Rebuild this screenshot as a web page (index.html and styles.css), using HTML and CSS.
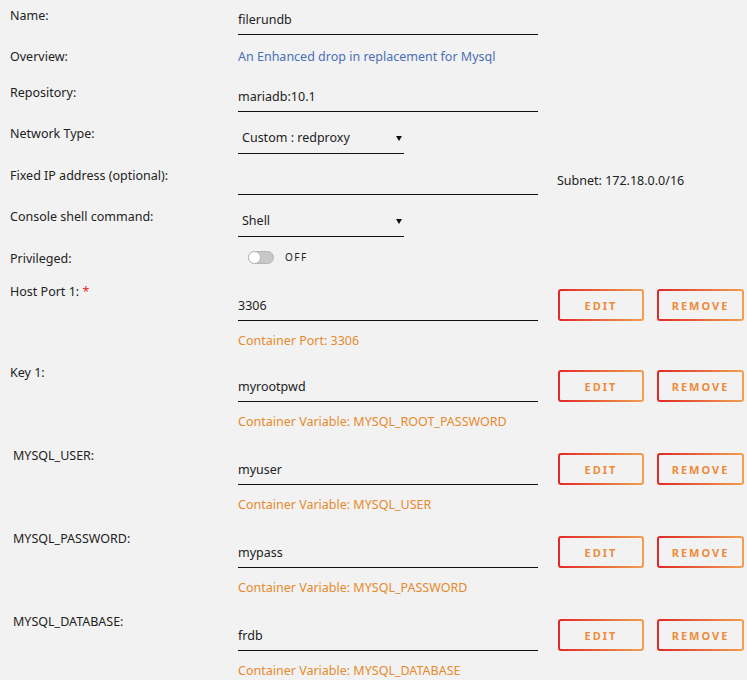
FILE: index.html
```html
<!DOCTYPE html>
<html lang="en">
<head>
  <meta charset="UTF-8">
  <meta name="viewport" content="width=device-width, initial-scale=1.0">
  <title>Add Container</title>
  <link rel="stylesheet" href="styles.css">
</head>
<body>

  <!-- Basic settings -->
  <div class="form">
    <div class="row">
      <div class="label">Name:</div>
      <div class="field"><div class="input">filerundb</div></div>
    </div>

    <div class="row text">
      <div class="label">Overview:</div>
      <div class="field"><div class="overview">An Enhanced drop in replacement for Mysql</div></div>
    </div>

    <div class="row">
      <div class="label">Repository:</div>
      <div class="field"><div class="input">mariadb:10.1</div></div>
    </div>

    <div class="row">
      <div class="label">Network Type:</div>
      <div class="field"><div class="input select">Custom : redproxy<span class="arrow"></span></div></div>
    </div>

    <div class="row">
      <div class="label">Fixed IP address (optional):</div>
      <div class="field"><div class="input"></div></div>
      <div class="subnet">Subnet: 172.18.0.0/16</div>
    </div>

    <div class="row">
      <div class="label">Console shell command:</div>
      <div class="field"><div class="input select">Shell<span class="arrow"></span></div></div>
    </div>

    <div class="row switch-row">
      <div class="label">Privileged:</div>
      <div class="field">
        <div class="switch"><span class="knob"></span></div>
        <span class="switch-text">OFF</span>
      </div>
    </div>

    <!-- Ports and variables -->
    <div class="row config port">
      <div class="label">Host Port 1: <span class="req">*</span></div>
      <div class="field">
        <div class="input">3306</div>
        <div class="hint">Container Port: 3306</div>
      </div>
      <div class="buttons">
        <button class="btn edit">EDIT</button>
        <button class="btn">REMOVE</button>
      </div>
    </div>

    <div class="row config">
      <div class="label">Key 1:</div>
      <div class="field">
        <div class="input">myrootpwd</div>
        <div class="hint">Container Variable: MYSQL_ROOT_PASSWORD</div>
      </div>
      <div class="buttons">
        <button class="btn edit">EDIT</button>
        <button class="btn">REMOVE</button>
      </div>
    </div>

    <div class="row config">
      <div class="label indent">MYSQL_USER:</div>
      <div class="field">
        <div class="input">myuser</div>
        <div class="hint">Container Variable: MYSQL_USER</div>
      </div>
      <div class="buttons">
        <button class="btn edit">EDIT</button>
        <button class="btn">REMOVE</button>
      </div>
    </div>

    <div class="row config">
      <div class="label indent">MYSQL_PASSWORD:</div>
      <div class="field">
        <div class="input">mypass</div>
        <div class="hint">Container Variable: MYSQL_PASSWORD</div>
      </div>
      <div class="buttons">
        <button class="btn edit">EDIT</button>
        <button class="btn">REMOVE</button>
      </div>
    </div>

    <div class="row config">
      <div class="label indent">MYSQL_DATABASE:</div>
      <div class="field">
        <div class="input">frdb</div>
        <div class="hint">Container Variable: MYSQL_DATABASE</div>
      </div>
      <div class="buttons">
        <button class="btn edit">EDIT</button>
        <button class="btn">REMOVE</button>
      </div>
    </div>
  </div>

</body>
</html>
```

FILE: styles.css
```css
    body {
      margin: 0;
      background-color: #f2f2f2;
      font-family: "Noto Sans", sans-serif;
      font-size: 12.5px;
      color: #222;
    }

    .form {
      padding: 6px 0 0 10px;
    }

    .row {
      display: flex;
      align-items: flex-start;
      min-height: 29px;
      margin-bottom: 12px;
    }

    .row.text {
      min-height: 24px;
    }

    .label {
      width: 228px;
      flex-shrink: 0;
      line-height: 20px;
      color: #222;
    }

    .label.indent {
      padding-left: 3px;
      width: 225px;
    }

    .req {
      color: #e22828;
    }

    .field {
      width: 300px;
    }

    .input {
      position: relative;
      height: 20px;
      line-height: 20px;
      margin-top: 4px;
      padding-bottom: 4px;
      border-bottom: 1px solid #111;
      color: #222;
    }

    .select {
      width: 162px;
      padding-left: 4px;
      margin-top: 4px;
      padding-bottom: 5px;
    }

    .arrow {
      position: absolute;
      right: 2px;
      top: 8px;
      width: 0;
      height: 0;
      border-left: 3px solid transparent;
      border-right: 3px solid transparent;
      border-top: 5px solid #111;
    }

    .overview {
      line-height: 20px;
      color: #4a6fb5;
    }

    .subnet {
      margin-left: 19px;
      margin-top: 5px;
      line-height: 20px;
    }

    /* switch */
    .row.switch-row {
      min-height: 20px;
      height: 20px;
      margin-bottom: 13px;
    }

    .switch-row .field {
      display: flex;
      align-items: center;
      height: 13px;
      margin-top: 2px;
    }

    .switch {
      position: relative;
      width: 24px;
      height: 11px;
      margin-left: 10px;
      border: 1px solid #b5b5b5;
      border-radius: 7px;
      background-color: #c8c8c8;
    }

    .knob {
      position: absolute;
      left: -1px;
      top: -1px;
      width: 11px;
      height: 11px;
      border: 1px solid #b5b5b5;
      border-radius: 50%;
      background-color: #fff;
    }

    .switch-text {
      margin-left: 11px;
      font-size: 10px;
      letter-spacing: 1.5px;
      line-height: 13px;
    }

    /* port / variable rows */
    .row.config {
      margin-bottom: 14px;
    }

    .row.config.port {
      margin-bottom: 12px;
    }

    .config .input {
      margin-top: 14px;
    }

    .hint {
      margin-top: 10px;
      line-height: 20px;
      color: #e68a2e;
    }

    .buttons {
      display: flex;
      gap: 13px;
      margin-left: 20px;
      margin-top: 7px;
    }

    .btn {
      width: 87px;
      height: 32px;
      padding: 0;
      border: 2px solid transparent;
      border-radius: 3px;
      background: linear-gradient(#f2f2f2, #f2f2f2) padding-box,
                  linear-gradient(90deg, #e22828, #f0a050) border-box;
      font-family: "Noto Sans", sans-serif;
      font-size: 11px;
      font-weight: bold;
      letter-spacing: 2px;
      color: #ec8c3c;
      cursor: pointer;
    }

    .btn.edit {
      width: 86px;
    }
```
